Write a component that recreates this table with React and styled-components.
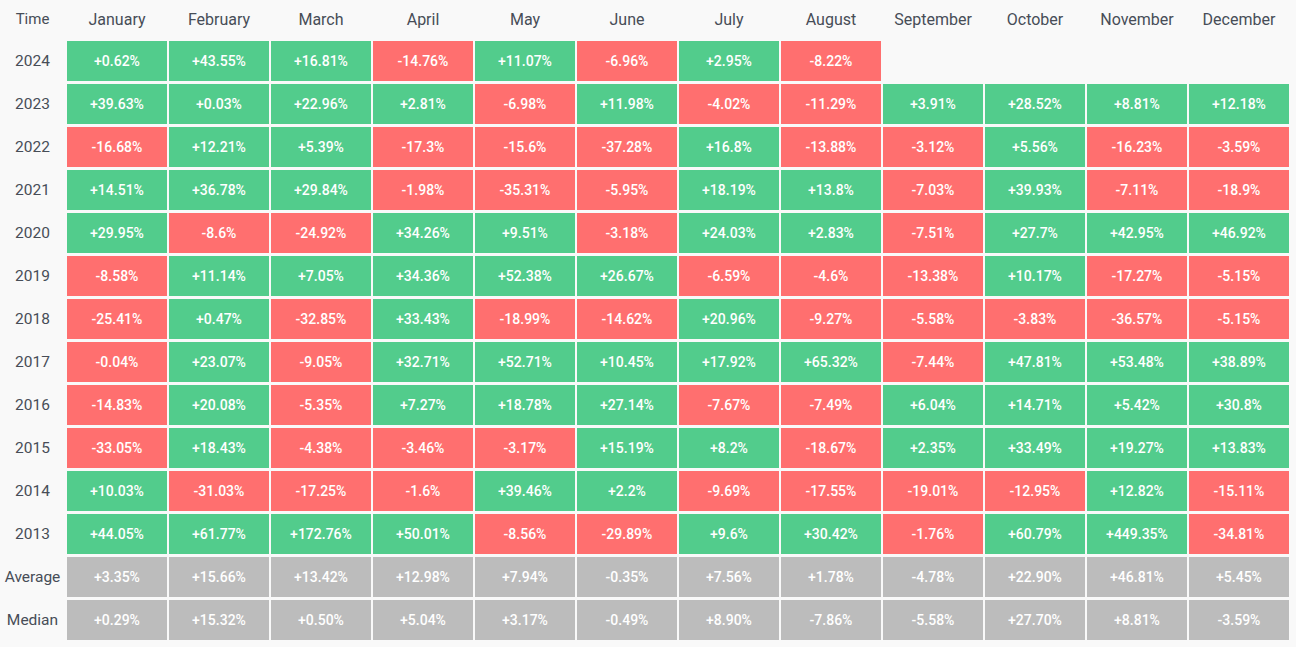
import React from 'react';
import styled, { createGlobalStyle } from 'styled-components';

const GlobalStyle = createGlobalStyle`
  html, body {
    margin: 0;
    padding: 0;
    background: #f9f9f9;
  }
  body {
    font-family: Roboto, "Noto Sans", "Liberation Sans", sans-serif;
  }
`;

const MONTHS = [
  'January', 'February', 'March', 'April', 'May', 'June',
  'July', 'August', 'September', 'October', 'November', 'December'
];

const ROWS = [
  ['2024', ['+0.62%', '+43.55%', '+16.81%', '-14.76%', '+11.07%', '-6.96%', '+2.95%', '-8.22%']],
  ['2023', ['+39.63%', '+0.03%', '+22.96%', '+2.81%', '-6.98%', '+11.98%', '-4.02%', '-11.29%', '+3.91%', '+28.52%', '+8.81%', '+12.18%']],
  ['2022', ['-16.68%', '+12.21%', '+5.39%', '-17.3%', '-15.6%', '-37.28%', '+16.8%', '-13.88%', '-3.12%', '+5.56%', '-16.23%', '-3.59%']],
  ['2021', ['+14.51%', '+36.78%', '+29.84%', '-1.98%', '-35.31%', '-5.95%', '+18.19%', '+13.8%', '-7.03%', '+39.93%', '-7.11%', '-18.9%']],
  ['2020', ['+29.95%', '-8.6%', '-24.92%', '+34.26%', '+9.51%', '-3.18%', '+24.03%', '+2.83%', '-7.51%', '+27.7%', '+42.95%', '+46.92%']],
  ['2019', ['-8.58%', '+11.14%', '+7.05%', '+34.36%', '+52.38%', '+26.67%', '-6.59%', '-4.6%', '-13.38%', '+10.17%', '-17.27%', '-5.15%']],
  ['2018', ['-25.41%', '+0.47%', '-32.85%', '+33.43%', '-18.99%', '-14.62%', '+20.96%', '-9.27%', '-5.58%', '-3.83%', '-36.57%', '-5.15%']],
  ['2017', ['-0.04%', '+23.07%', '-9.05%', '+32.71%', '+52.71%', '+10.45%', '+17.92%', '+65.32%', '-7.44%', '+47.81%', '+53.48%', '+38.89%']],
  ['2016', ['-14.83%', '+20.08%', '-5.35%', '+7.27%', '+18.78%', '+27.14%', '-7.67%', '-7.49%', '+6.04%', '+14.71%', '+5.42%', '+30.8%']],
  ['2015', ['-33.05%', '+18.43%', '-4.38%', '-3.46%', '-3.17%', '+15.19%', '+8.2%', '-18.67%', '+2.35%', '+33.49%', '+19.27%', '+13.83%']],
  ['2014', ['+10.03%', '-31.03%', '-17.25%', '-1.6%', '+39.46%', '+2.2%', '-9.69%', '-17.55%', '-19.01%', '-12.95%', '+12.82%', '-15.11%']],
  ['2013', ['+44.05%', '+61.77%', '+172.76%', '+50.01%', '-8.56%', '-29.89%', '+9.6%', '+30.42%', '-1.76%', '+60.79%', '+449.35%', '-34.81%']],
];

const SUMMARY = [
  ['Average', ['+3.35%', '+15.66%', '+13.42%', '+12.98%', '+7.94%', '-0.35%', '+7.56%', '+1.78%', '-4.78%', '+22.90%', '+46.81%', '+5.45%']],
  ['Median', ['+0.29%', '+15.32%', '+0.50%', '+5.04%', '+3.17%', '-0.49%', '+8.90%', '-7.86%', '-5.58%', '+27.70%', '+8.81%', '-3.59%']],
];

const COLORS = {
  up: '#52cc8c',
  down: '#ff6f6f',
  neutral: '#bcbcbc',
};

const Grid = styled.div`
  display: grid;
  grid-template-columns: 65px repeat(12, 100px);
  grid-template-rows: 38px;
  grid-auto-rows: 40px;
  column-gap: 2px;
  row-gap: 3px;
  width: 1296px;
`;

const HeadCell = styled.div`
  display: flex;
  align-items: center;
  justify-content: center;
  font-size: ${p => (p.$small ? '15px' : '16px')};
  color: #474d57;
  white-space: nowrap;
`;

const Label = styled.div`
  display: flex;
  align-items: center;
  justify-content: center;
  padding-bottom: 1px;
  font-size: 15.5px;
  color: #474d57;
  white-space: nowrap;
`;

const Cell = styled.div`
  display: flex;
  align-items: center;
  justify-content: center;
  background: ${p => COLORS[p.$tone]};
  color: #fff;
  font-size: 14px;
  font-weight: 500;
  white-space: nowrap;
`;

const Blank = styled.div``;

const toneOf = (value) => (value.startsWith('-') ? 'down' : 'up');

export default function App() {
  return (
    <>
      <GlobalStyle />
      <Grid>
        <HeadCell $small>Time</HeadCell>
        {MONTHS.map(m => <HeadCell key={m}>{m}</HeadCell>)}

        {ROWS.map(([year, values]) => (
          <React.Fragment key={year}>
            <Label>{year}</Label>
            {MONTHS.map((m, i) =>
              values[i] ? (
                <Cell key={m} $tone={toneOf(values[i])}>{values[i]}</Cell>
              ) : (
                <Blank key={m} />
              )
            )}
          </React.Fragment>
        ))}

        {SUMMARY.map(([name, values]) => (
          <React.Fragment key={name}>
            <Label>{name}</Label>
            {values.map((v, i) => (
              <Cell key={i} $tone="neutral">{v}</Cell>
            ))}
          </React.Fragment>
        ))}
      </Grid>
    </>
  );
}
